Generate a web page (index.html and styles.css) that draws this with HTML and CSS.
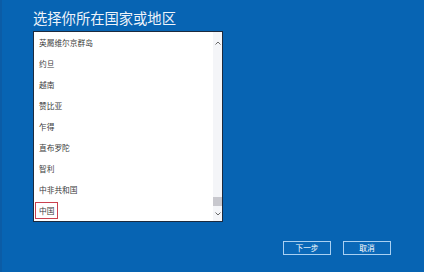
FILE: index.html
```html
<!DOCTYPE html>
<html lang="zh-CN">
<head>
<meta charset="utf-8">
<title>选择你所在国家或地区</title>
<link rel="stylesheet" href="styles.css">
</head>
<body>
<div class="page">
  <h1 class="title">选择你所在国家或地区</h1>
  <div class="listbox">
    <ul class="list">
      <li class="item">英屬维尔京群岛</li>
      <li class="item">约旦</li>
      <li class="item">越南</li>
      <li class="item">赞比亚</li>
      <li class="item">乍得</li>
      <li class="item">直布罗陀</li>
      <li class="item">智利</li>
      <li class="item">中非共和国</li>
      <li class="item"><span class="selected">中国</span></li>
    </ul>
    <div class="scrollbar">
      <div class="arrow arrow-up">
        <svg width="6" height="4" viewBox="0 0 6 4"><path d="M0.5 3.5 L3 1 L5.5 3.5" fill="none" stroke="#6b6b6b" stroke-width="1"/></svg>
      </div>
      <div class="track"><div class="thumb"></div></div>
      <div class="arrow arrow-down">
        <svg width="6" height="4" viewBox="0 0 6 4"><path d="M0.5 0.5 L3 3 L5.5 0.5" fill="none" stroke="#6b6b6b" stroke-width="1"/></svg>
      </div>
    </div>
  </div>
  <div class="footer">
    <button class="btn">下一步</button>
    <button class="btn">取消</button>
  </div>
</div>
</body>
</html>
```

FILE: styles.css
```css
html, body {
  margin: 0;
  padding: 0;
}
body {
  width: 424px;
  height: 272px;
  background: #0764b3;
  font-family: "Noto Sans CJK SC", "Noto Sans", sans-serif;
  overflow: hidden;
  box-sizing: border-box;
  border-left: 2px solid #0b5ca6;
}
.page {
  display: flex;
  flex-direction: column;
  padding-left: 31px;
}
.title {
  margin: 10px 0 0 0;
  font-size: 14.3px;
  line-height: 16px;
  font-weight: normal;
  color: #eef3fa;
}
.listbox {
  margin-top: 5px;
  width: 190px;
  height: 191px;
  box-sizing: border-box;
  border: 1px solid #1c2a3e;
  background: #ffffff;
  display: flex;
}
.list {
  list-style: none;
  margin: 0;
  padding: 0;
  flex: 1;
}
.item {
  height: 21px;
  display: flex;
  align-items: center;
  padding-left: 5px;
  font-size: 7.7px;
  color: #3a3a3a;
}
.selected {
  margin-left: -4px;
  padding: 2.5px 3px;
  line-height: 10px;
  border: 1.5px solid #c9414f;
}
.scrollbar {
  width: 9px;
  background: #f4f5f8;
  display: flex;
  flex-direction: column;
}
.arrow {
  display: flex;
  align-items: center;
  justify-content: center;
}
.arrow-up {
  height: 22px;
}
.arrow-down {
  height: 15px;
}
.track {
  flex: 1;
  display: flex;
  flex-direction: column;
  justify-content: flex-end;
}
.thumb {
  height: 9px;
  background: #c8c8ce;
}
.footer {
  display: flex;
  justify-content: flex-end;
  gap: 12px;
  margin-top: 19px;
  padding-right: 33px;
}
.btn {
  width: 48px;
  height: 14px;
  padding: 0;
  box-sizing: border-box;
  border: 1.5px solid #a9d0f2;
  background: #0a68b8;
  color: #ffffff;
  font-family: "Noto Sans CJK SC", "Noto Sans", sans-serif;
  font-size: 7.7px;
  line-height: 10px;
}
```
